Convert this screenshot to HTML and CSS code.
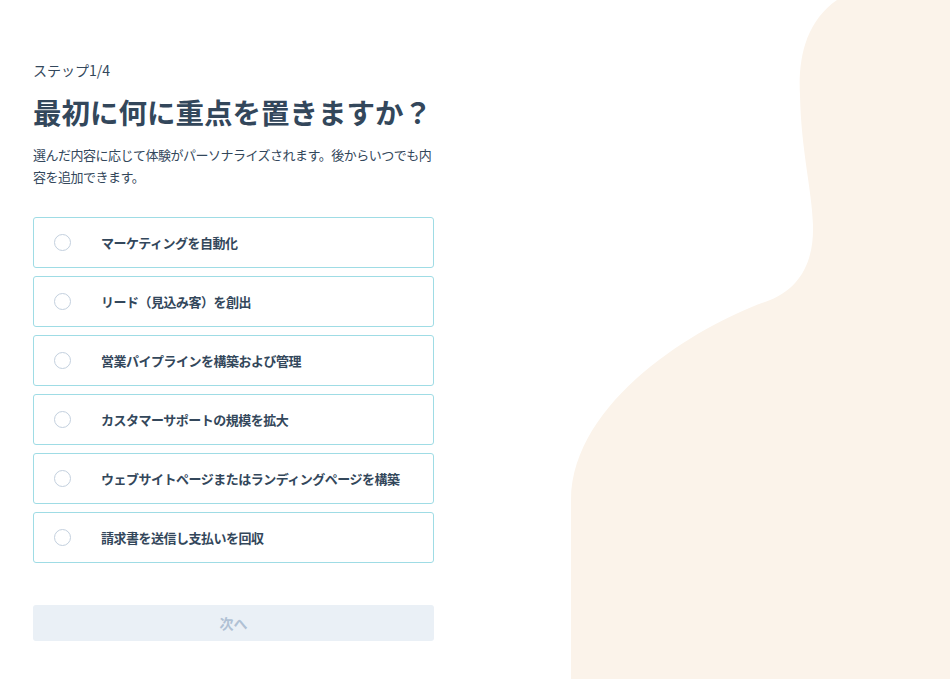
FILE: index.html
```html
<!DOCTYPE html>
<html lang="ja">

<head>
  <meta charset="UTF-8">
  <meta name="viewport" content="width=device-width, initial-scale=1.0">
  <title>ステップ1/4</title>
  <link rel="stylesheet" href="styles.css">
</head>

<body>
  <svg class="blob" viewBox="0 0 950 679" preserveAspectRatio="none" aria-hidden="true">
    <path d="M837 0 C805 22 798 60 800 95 C801 150 812 190 813 225 C814 262 800 290 765 302 C700 325 572 400 571 500 L571 679 L950 679 L950 0 Z" fill="#fbf3ea" />
  </svg>

  <main class="onboarding">
    <p class="step">ステップ1/4</p>
    <h1 class="title">最初に何に重点を置きますか？</h1>
    <p class="lead">選んだ内容に応じて体験がパーソナライズされます。後からいつでも内容を追加できます。</p>

    <ul class="options">
      <li><label class="option"><input type="radio" name="focus"><span class="radio"></span><span class="label">マーケティングを自動化</span></label></li>
      <li><label class="option"><input type="radio" name="focus"><span class="radio"></span><span class="label">リード（見込み客）を創出</span></label></li>
      <li><label class="option"><input type="radio" name="focus"><span class="radio"></span><span class="label">営業パイプラインを構築および管理</span></label></li>
      <li><label class="option"><input type="radio" name="focus"><span class="radio"></span><span class="label">カスタマーサポートの規模を拡大</span></label></li>
      <li><label class="option"><input type="radio" name="focus"><span class="radio"></span><span class="label">ウェブサイトページまたはランディングページを構築</span></label></li>
      <li><label class="option"><input type="radio" name="focus"><span class="radio"></span><span class="label">請求書を送信し支払いを回収</span></label></li>
    </ul>

    <button class="next" disabled>次へ</button>
  </main>
</body>

</html>
```

FILE: styles.css
```css
* {
  margin: 0;
  padding: 0;
  box-sizing: border-box;
}

html,
body {
  height: 100%;
}

body {
  position: relative;
  overflow: hidden;
  background-color: #fff;
  color: #33475b;
  font-family: "Noto Sans CJK JP", "Noto Sans", sans-serif;
}

.blob {
  position: absolute;
  top: 0;
  left: 0;
  width: 950px;
  height: 679px;
  z-index: 0;
}

.onboarding {
  position: relative;
  z-index: 1;
  width: 401px;
  margin-left: 33px;
  padding-top: 58px;
}

.step {
  font-size: 14px;
  line-height: 24px;
}

.title {
  margin-top: 10px;
  font-size: 28.5px;
  line-height: 40px;
  font-weight: 700;
}

.lead {
  margin-top: 12px;
  font-size: 13px;
  letter-spacing: -0.5px;
  line-height: 22px;
}

.options {
  list-style: none;
  display: flex;
  flex-direction: column;
  gap: 8px;
  margin-top: 29px;
}

.option {
  display: flex;
  align-items: center;
  height: 51px;
  padding-left: 20px;
  border: 1px solid #9fdce5;
  border-radius: 3px;
  background-color: #fff;
  cursor: pointer;
}

.option input {
  display: none;
}

.radio {
  width: 17px;
  height: 17px;
  border: 1px solid #c3d0de;
  border-radius: 50%;
  background-color: #fff;
}

.label {
  margin-left: 30px;
  font-size: 13px;
  letter-spacing: -0.5px;
  font-weight: 700;
}

.next {
  display: block;
  width: 100%;
  height: 36px;
  margin-top: 42px;
  border: none;
  border-radius: 3px;
  background-color: #eaf0f6;
  color: #b0c1d4;
  font-family: inherit;
  font-size: 14px;
  font-weight: 700;
}
```
